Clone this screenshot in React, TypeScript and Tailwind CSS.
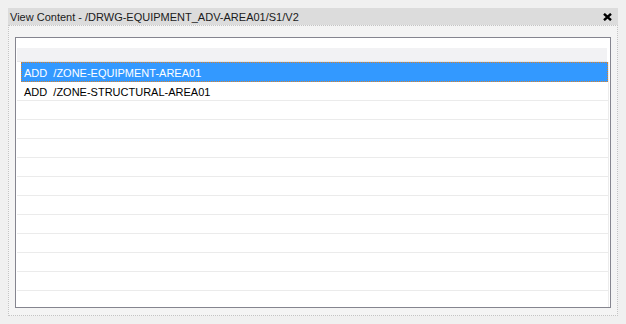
import React from "react";

const rows = [
  "ADD  /ZONE-STRUCTURAL-AREA01",
  "", "", "", "", "", "", "", "", "", "", "", "",
];

export default function App() {
  return (
    <div
      className="w-[626px] h-[324px] bg-[#f0f0f0] pt-[8px] px-[8px] overflow-hidden"
      style={{ fontFamily: '"Liberation Sans", Arial, sans-serif' }}
    >
      <div className="h-[17px] bg-[#dcdcdc] flex items-center justify-between pl-[2px] pr-[6px]">
        <span className="text-[11px] leading-none text-[#1a1a1a] whitespace-pre pt-[1px]">
          View Content - /DRWG-EQUIPMENT_ADV-AREA01/S1/V2
        </span>
        <svg width="9" height="8" viewBox="0 0 9 8" className="mt-[1px]">
          <path d="M1 0.8 L8 7.2 M8 0.8 L1 7.2" stroke="#000" strokeWidth="2.4" strokeLinecap="butt" />
        </svg>
      </div>
      <div className="h-[291px] bg-[#f4f4f4] border border-dotted border-[#c4c4c4] pt-[11px] px-[6px] pb-[7px]">
        <div className="h-[271px] border border-[#85858f] bg-white overflow-hidden flex flex-col">
          <div className="h-[10px] shrink-0" />
          <div className="h-[14px] shrink-0 ml-[1px] mr-[3px] bg-[#f2f2f4] border-b border-[#e6e6e8]" />
          <div className="flex-1 ml-[1px] mr-[1px] border-r border-[#ececec] overflow-hidden">
            <div className="h-[20px] ml-[4px] bg-[#3399ff] border border-dotted border-[#d9822b] flex items-center pl-[2px] pt-[2px]">
              <span className="text-[11px] leading-none text-white whitespace-pre">ADD  /ZONE-EQUIPMENT-AREA01</span>
            </div>
            {rows.map((r, i) => (
              <div
                key={i}
                className="h-[19px] border-b border-[#ebebeb] flex items-center pl-[7px] pt-[2px]"
              >
                <span className="text-[11px] leading-none text-black whitespace-pre">{r}</span>
              </div>
            ))}
          </div>
        </div>
      </div>
    </div>
  );
}
